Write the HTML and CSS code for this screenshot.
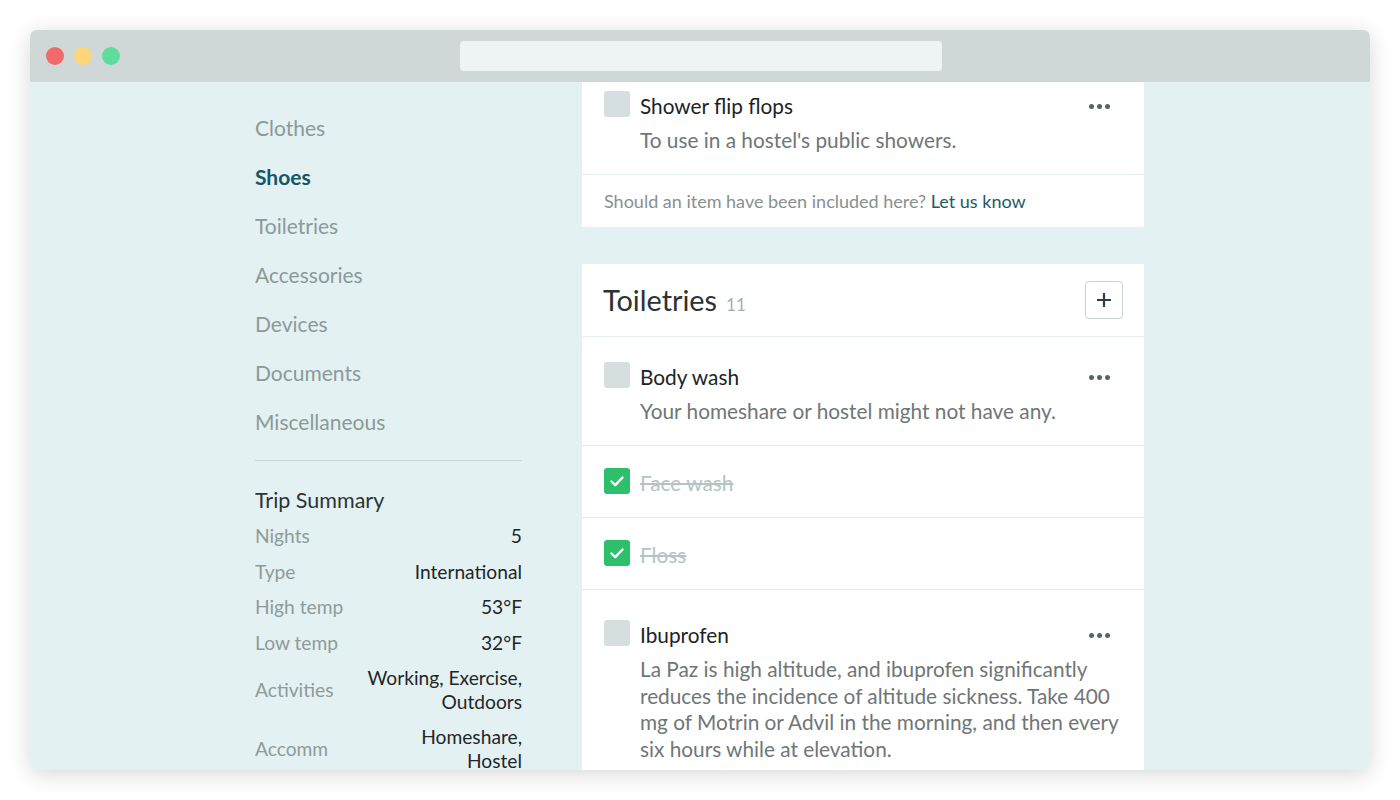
FILE: index.html
```html
<!DOCTYPE html>
<html lang="en">
<head>
<meta charset="utf-8">
<title>Packing list</title>
<link rel="stylesheet" href="styles.css">
</head>
<body>
<div class="window">
  <div class="titlebar">
    <div class="lights">
      <span class="light red"></span>
      <span class="light yellow"></span>
      <span class="light green"></span>
    </div>
    <div class="address"></div>
  </div>
  <div class="content">
    <aside class="sidebar">
      <nav class="nav">
        <a class="nav-item">Clothes</a>
        <a class="nav-item active">Shoes</a>
        <a class="nav-item">Toiletries</a>
        <a class="nav-item">Accessories</a>
        <a class="nav-item">Devices</a>
        <a class="nav-item">Documents</a>
        <a class="nav-item">Miscellaneous</a>
      </nav>
      <div class="divider"></div>
      <h3 class="summary-title">Trip Summary</h3>
      <dl class="summary">
        <div class="row"><dt>Nights</dt><dd>5</dd></div>
        <div class="row"><dt>Type</dt><dd>International</dd></div>
        <div class="row"><dt>High temp</dt><dd>53°F</dd></div>
        <div class="row"><dt>Low temp</dt><dd>32°F</dd></div>
        <div class="row"><dt>Activities</dt><dd>Working, Exercise,<br>Outdoors</dd></div>
        <div class="row"><dt>Accomm</dt><dd>Homeshare,<br>Hostel</dd></div>
      </dl>
    </aside>
    <main class="main">
      <section class="card">
        <div class="item item-first">
          <span class="check"></span>
          <div class="item-title">Shower flip flops</div>
          <span class="dots"><i></i><i></i><i></i></span>
          <div class="item-desc">To use in a hostel's public showers.</div>
        </div>
        <div class="card-footer">Should an item have been included here? <a class="link">Let us know</a></div>
      </section>

      <section class="card">
        <header class="card-header">
          <h2 class="card-title">Toiletries <span class="count">11</span></h2>
          <button class="add-btn" aria-label="Add item">
            <svg width="16" height="16" viewBox="0 0 16 16"><path d="M8 1v14M1 8h14" stroke="#333d40" stroke-width="2.2" fill="none"/></svg>
          </button>
        </header>
        <div class="item">
          <span class="check"></span>
          <div class="item-title">Body wash</div>
          <span class="dots"><i></i><i></i><i></i></span>
          <div class="item-desc">Your homeshare or hostel might not have any.</div>
        </div>
        <div class="item item-done">
          <span class="check checked">
            <svg width="26" height="26" viewBox="0 0 26 26"><path d="M7.5 13.5l3.8 3.6 7.2-7.6" stroke="#fff" stroke-width="2.4" fill="none" stroke-linecap="round" stroke-linejoin="round"/></svg>
          </span>
          <div class="item-title">Face wash</div>
        </div>
        <div class="item item-done">
          <span class="check checked">
            <svg width="26" height="26" viewBox="0 0 26 26"><path d="M7.5 13.5l3.8 3.6 7.2-7.6" stroke="#fff" stroke-width="2.4" fill="none" stroke-linecap="round" stroke-linejoin="round"/></svg>
          </span>
          <div class="item-title">Floss</div>
        </div>
        <div class="item item-tall">
          <span class="check"></span>
          <div class="item-title">Ibuprofen</div>
          <span class="dots"><i></i><i></i><i></i></span>
          <div class="item-desc">La Paz is high altitude, and ibuprofen significantly reduces the incidence of altitude sickness. Take 400 mg of Motrin or Advil in the morning, and then every six hours while at elevation.</div>
        </div>
      </section>
    </main>
  </div>
</div>
</body>
</html>
```

FILE: styles.css
```css
* { box-sizing: border-box; }

body {
  margin: 0;
  background: #ffffff;
  font-family: Lato, "Open Sans", Arial, sans-serif;
  -webkit-font-smoothing: antialiased;
}

.window {
  margin: 30px;
  width: 1340px;
  height: 740px;
  border-radius: 7px;
  overflow: hidden;
  box-shadow: 0 4px 22px rgba(0, 0, 0, 0.16);
  display: flex;
  flex-direction: column;
}

.titlebar {
  height: 52px;
  flex: none;
  background: #cfd8d7;
  display: flex;
  align-items: center;
}

.lights {
  display: flex;
  gap: 10px;
  padding-left: 16px;
}

.light {
  width: 18px;
  height: 18px;
  border-radius: 50%;
  display: block;
}
.red { background: #f06a6a; }
.yellow { background: #fdd67a; }
.green { background: #5fdc99; }

.address {
  width: 482px;
  height: 30px;
  border-radius: 4px;
  background: #eef3f3;
  margin-left: 340px;
}

.content {
  flex: 1;
  background: #e4f1f2;
  display: flex;
  padding-left: 225px;
  gap: 60px;
  overflow: hidden;
}

/* Sidebar */
.sidebar {
  width: 267px;
  flex: none;
  padding-top: 21px;
}

.nav { display: flex; flex-direction: column; }

.nav-item {
  font-size: 21px;
  line-height: 49px;
  height: 49px;
  color: #8a9a98;
}
.nav-item.active {
  color: #175663;
  font-weight: 700;
}

.divider {
  height: 1px;
  background: #c8d6d6;
  margin-top: 14px;
}

.summary-title {
  margin: 25px 0 4px;
  font-size: 21.5px;
  line-height: 28px;
  font-weight: 400;
  color: #2c3436;
}

.summary { margin: 0; }

.row {
  display: flex;
  align-items: center;
  justify-content: space-between;
  padding: 6px 0;
  font-size: 19.2px;
  line-height: 23.5px;
}
.row dt { color: #8d9b9a; }
.row dd {
  margin: 0;
  text-align: right;
  color: #1e2628;
}

/* Main */
.main {
  width: 562px;
  flex: none;
  margin-top: -16px;
  display: flex;
  flex-direction: column;
  gap: 37px;
}

.card { background: #ffffff; }

.card-header {
  height: 72px;
  padding: 0 21px 0 21px;
  display: flex;
  align-items: center;
  justify-content: space-between;
  border-bottom: 1px solid #e7efef;
  box-sizing: content-box;
}

.card-title {
  margin: 0;
  font-size: 28.8px;
  font-weight: 400;
  color: #2b3335;
  display: flex;
  align-items: baseline;
  gap: 9px;
}
.count {
  font-size: 17px;
  color: #a5afaf;
}

.add-btn {
  width: 38px;
  height: 38px;
  border: 1px solid #c9d0d0;
  border-radius: 4px;
  background: #ffffff;
  display: flex;
  align-items: center;
  justify-content: center;
  padding: 0;
}

.item {
  display: grid;
  grid-template-columns: 26px 1fr auto;
  column-gap: 10px;
  align-items: start;
  padding: 25px 22px 21px 22px;
  border-bottom: 1px solid #e7efef;
}
.item:last-child { border-bottom: none; }
.item-first { padding-bottom: 20px; }
.item-done { padding: 22px 22px 21px 22px; }
.item-tall { padding-top: 30px; }

.check {
  width: 26px;
  height: 26px;
  border-radius: 3px;
  background: #d5dfdf;
  display: block;
}
.check.checked { background: #2ebf6d; }
.check svg { display: block; }

.item-title {
  padding-top: 2px;
  font-size: 20.8px;
  line-height: 26px;
  color: #1c2326;
}
.item-done .item-title {
  color: #b5c3c3;
  text-decoration: line-through;
}

.item-desc {
  grid-column: 2 / 4;
  margin-top: 8px;
  font-size: 20.8px;
  line-height: 26.5px;
  color: #6f7677;
}

.dots {
  display: flex;
  gap: 3px;
  margin-top: 13px;
  margin-right: 12px;
}
.dots i {
  width: 5px;
  height: 5px;
  border-radius: 50%;
  background: #55646d;
  display: block;
}

.card-footer {
  padding: 15px 22px;
  font-size: 18px;
  line-height: 22px;
  color: #87918f;
}
.link { color: #1a5c66; }
```
